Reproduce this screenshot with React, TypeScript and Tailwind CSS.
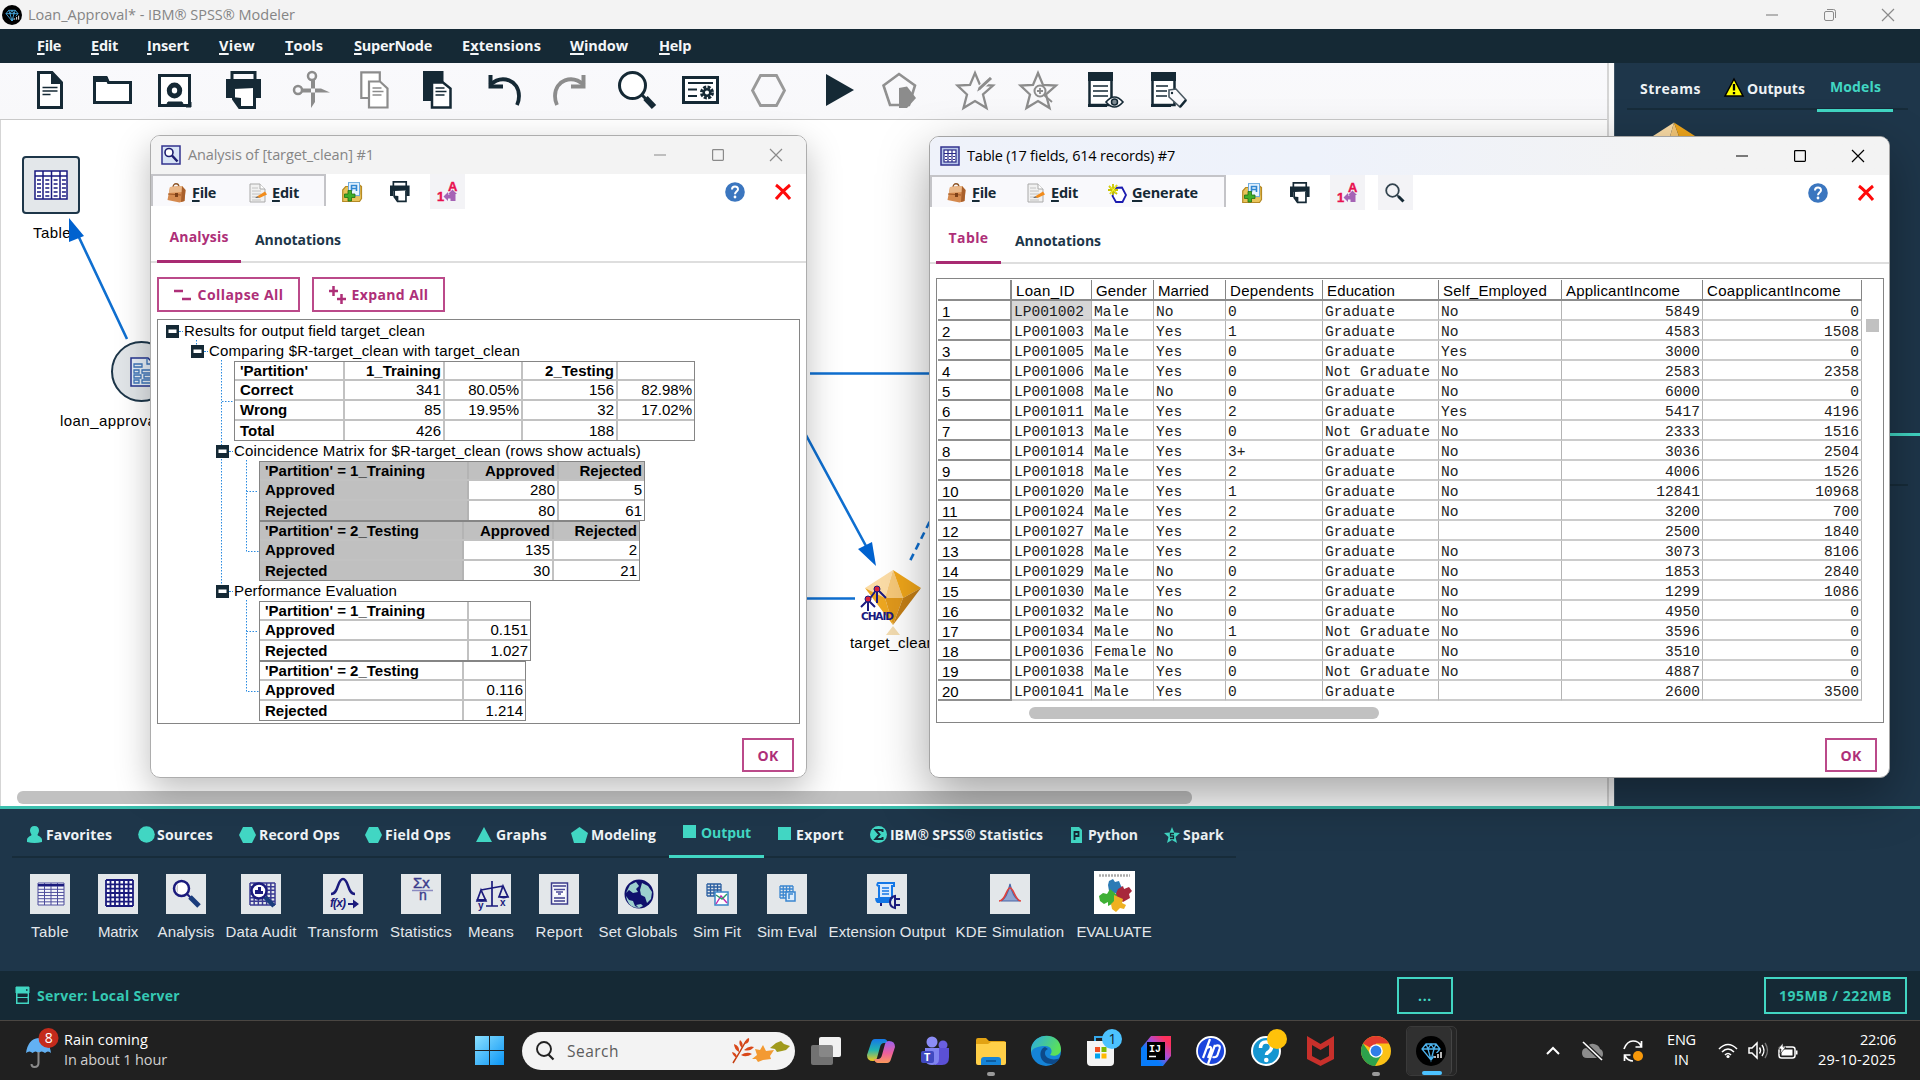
import React, { useLayoutEffect, useRef, useState } from "react";

const ARIAL = "font-['Liberation_Sans',sans-serif]";
const PLEX = "font-['Open_Sans',sans-serif] font-bold";
const SEGOE = "font-['Open_Sans',sans-serif]";

/* Text set to an exact width by adjusting its tracking. */
function Fit({ w, className = "", children }: { w: number; className?: string; children: React.ReactNode }) {
  const ref = useRef<HTMLSpanElement>(null);
  const [ls, setLs] = useState(0);
  useLayoutEffect(() => {
    const el = ref.current;
    if (!el) return;
    const n = (el.textContent || "").length || 1;
    setLs((w - el.getBoundingClientRect().width) / n);
  }, [w]);
  return (
    <span ref={ref} className={"inline-block w-fit whitespace-nowrap leading-5 " + className} style={{ letterSpacing: ls }}>
      {children}
    </span>
  );
}

/* Menu label with its first letter (or another) underlined. */
function Mn({ t, at = 0 }: { t: string; at?: number }) {
  return (
    <>
      {t.slice(0, at)}
      <u className="underline decoration-2 underline-offset-2">{t[at]}</u>
      {t.slice(at + 1)}
    </>
  );
}

function Svg({ w, h, vb, className = "", children }: { w: number; h: number; vb?: string; className?: string; children: React.ReactNode }) {
  return (
    <svg width={w} height={h} viewBox={vb || `0 0 ${w} ${h}`} className={"shrink-0 overflow-visible " + className} fill="none">
      {children}
    </svg>
  );
}

const D = "#152935";
const G = "#8c8c8c";

/* ---------- shared icons ---------- */
const Printer = ({ s = 1 }: { s?: number }) => (
  <Svg w={35 * s} h={38 * s} vb="0 0 35 38">
    <path d="M6 9V1.5h23V9" stroke={D} strokeWidth="3" />
    <path d="M0 8h35v19h-6V18H6v9H0z" fill={D} />
    <path d="M7.5 18v10l6 8.5h15V17" stroke={D} strokeWidth="3" fill="#fff" />
    <path d="M6 26l9 1v10z" fill={D} />
  </Svg>
);
const Diamond = ({ r }: { r: number }) => (
  <Svg w={r * 2} h={r * 2} vb="0 0 30 30">
    <circle cx="15" cy="15" r="15" fill="#000" />
    <path d="M10 8h10l4 5-9 11-9-11zM6 13h18M10 8l2 5 3 11 3-11 2-5M12 13l3-5 3 5" stroke="#4db2ec" strokeWidth="1.3" />
    <path d="M18 17h8v7h-8z" fill="#000" />
    <path d="M19 22v-2M22 22v-4M25 22v-6" stroke="#fff" strokeWidth="1.4" />
  </Svg>
);
const Bag = () => (
  <Svg w={19} h={20}>
    <path d="M6 4.500c0-5 6-5 6 0" stroke="#8d5426" strokeWidth="1.3" />
    <path d="M3 4l12-1 3.500 4-1 11-5 1.500L0.500 17z" fill="#d58a4f" />
    <path d="M3 4l12-1 1 6-14 1z" fill="#eab788" />
    <path d="M15 3l3.500 4-1 11-3.500 1z" fill="#a9602b" />
    <path d="M1 11l13 1" stroke="#a35a28" />
    <path d="M8 10h3v4H8z" fill="#7d3f17" />
  </Svg>
);
const EditDoc = () => (
  <Svg w={18} h={20}>
    <path d="M1 1h10l5 5v13H1z" fill="#f1f1f1" stroke="#a9a9a9" />
    <path d="M11 1v5h5" stroke="#a9a9a9" fill="#fff" />
    <path d="M3 5h6M3 8h9M3 11h9M3 14h6M3 17h9" stroke="#c2c2c2" />
    <path d="M8 13.500l8-5 2 3-7.500 3.500z" fill="#f28c1c" />
    <path d="M6 15l2-1.500 2.500 1z" fill="#555" />
  </Svg>
);
const FolderPlus = () => (
  <Svg w={20} h={20}>
    <path d="M0.700 8l3-3.500h3V12h11V3l1.800 1.500v12l-2 3H0.700z" fill="#e9c35a" stroke="#b58a25" strokeWidth="1.200" />
    <rect x="6.500" y="0.600" width="11" height="13" fill="#e8f4ff" stroke="#6aa9de" />
    <path d="M9.500 9V3.500h5V9M9.500 6.500h5" stroke="#2f86d0" strokeWidth="1.600" />
    <path d="M6 8.500h3.500V12H13v3.500H9.500V19H6v-3.500H2.500V12H6z" fill="#3fae2a" stroke="#206f12" strokeWidth=".8" />
  </Svg>
);
const OneA = () => (
  <Svg w={20} h={21}>
    <text x="0" y="20" fontSize="13" fontWeight="700" fill="#e8104f" stroke="#e8104f" strokeWidth=".4" fontFamily="Liberation Sans, sans-serif">1</text>
    <text x="11" y="9.500" fontSize="13" fontWeight="700" fill="#e8104f" stroke="#e8104f" strokeWidth=".4" fontFamily="Liberation Sans, sans-serif">A</text>
    <path d="M15.500 8.500l4.500 4.500h-1.500v7h-5v-2.500H11V20l-4.500-4.500L11 11v2.500h1.500V13H11z" fill="#a563b5" />
  </Svg>
);
const Help = () => (
  <Svg w={20} h={20}>
    <circle cx="10" cy="10" r="9.800" fill="#3b76bf" />
    <path d="M7 7.500c0-4 6-4 6-.300 0 2.300-3 2.500-3 5" stroke="#fff" strokeWidth="2" />
    <circle cx="10" cy="15" r="1.400" fill="#fff" />
  </Svg>
);
const RedX = () => (
  <Svg w={18} h={16}>
    <path d="M2 1c4 3 9 8 14 14M16 1C11 5 6 10 2 15" stroke="#ff0a0a" strokeWidth="3" />
  </Svg>
);
const Generate = () => (
  <Svg w={19} h={19}>
    <path d="M7 4l7-.500L18 11l-3.500 7H8l-3.500-6z" fill="#fff" stroke="#1c1cb0" strokeWidth="1.800" />
    <path d="M1 2l8 8M9 1L2 10M5 0v11M0 6h10" stroke="#c9c400" strokeWidth="1.800" />
    <path d="M2 2.500l6.500 6.500M8.500 1.500L2.500 9.500" stroke="#ffff3a" strokeWidth="1" />
  </Svg>
);
const AnalysisIco = () => (
  <Svg w={20} h={20}>
    <rect x="1" y="1" width="18" height="18" fill="#d8e4f6" stroke="#33338f" strokeWidth="1.500" />
    <circle cx="8" cy="7.500" r="4" fill="#fff" stroke="#1d1d70" strokeWidth="1.600" />
    <path d="M11 10.500l5.500 6" stroke="#1d1d70" strokeWidth="2.500" />
  </Svg>
);
const TableIco = () => (
  <Svg w={20} h={20}>
    <rect x="1" y="1" width="18" height="18" fill="#b9c7ea" stroke="#33338f" strokeWidth="1.500" />
    <rect x="4" y="4" width="12" height="12" fill="#fff" stroke="#2b2b88" strokeWidth="1.200" />
    <path d="M8 4v12M12 4v12M4 7.500h12M5 10.500h2M9 10.500h2M13 10.500h2M5 13.500h2M9 13.500h2M13 13.500h2" stroke="#2b2b88" strokeWidth="1.200" />
  </Svg>
);
const Controls = ({ c, restore = false }: { c: string; restore?: boolean }) => (
  <div className="flex items-center gap-[46px]">
    <Svg w={12} h={12}><path d="M0 6h12" stroke={c} strokeWidth="1.200" /></Svg>
    <Svg w={12} h={12}>
      {restore ? (
        <>
          <rect x=".5" y="2.500" width="9" height="9" rx="1.500" stroke={c} />
          <path d="M3 .5h6.500a2 2 0 0 1 2 2V9" stroke={c} />
        </>
      ) : (
        <rect x=".6" y=".6" width="10.800" height="10.800" rx=".8" stroke={c} strokeWidth="1.200" />
      )}
    </Svg>
    <Svg w={12} h={12}><path d="M0 0l12 12M12 0L0 12" stroke={c} strokeWidth="1.200" /></Svg>
  </div>
);

/* ---------- main window ---------- */
function TitleBar() {
  return (
    <div className="flex h-[29px] items-center bg-[#f3f3f3] pl-[2px] pr-[26px]">
      <Diamond r={10} />
      <Fit w={267} className={SEGOE + " ml-[6px] text-[14.5px] text-[#858585]"}>Loan_Approval* - IBM® SPSS® Modeler</Fit>
      <div className="ml-auto"><Controls c="#8a8a8a" restore /></div>
    </div>
  );
}

function MenuBar() {
  const items: [string, number, number, string][] = [
    ["File", 0, 24, "ml-[37px]"], ["Edit", 0, 27, "ml-[30px]"], ["Insert", 0, 42, "ml-[29px]"], ["View", 0, 36, "ml-[30px]"],
    ["Tools", 0, 38, "ml-[30px]"], ["SuperNode", 0, 78, "ml-[31px]"], ["Extensions", 1, 79, "ml-[30px]"], ["Window", 0, 58, "ml-[29px]"], ["Help", 0, 32, "ml-[31px]"],
  ];
  return (
    <div className="flex h-[34px] items-center bg-[#152935] text-[#f4f6f8]">
      {items.map(([t, at, w, m]) => (
        <Fit key={t} w={w} className={PLEX + " text-[14.5px] " + m}><Mn t={t} at={at} /></Fit>
      ))}
    </div>
  );
}

function Toolbar() {
  const star = "M19 2l5 12 13 .500-10 9 3.500 13.500L19 30 7.500 37 11 23.500 1.500 14.500 14 14z";
  return (
    <div className="flex h-[57px] items-center border-b border-[#c9c9c9] bg-gradient-to-b from-[#f9f9fc] to-[#f8f8fa] pb-[2px] pl-[37px]">
      <Svg w={26} h={38}><path d="M1.500 1.500H15l9.500 10v25h-23z" stroke={D} strokeWidth="3" fill="#fff" /><path d="M14 0v13h12z" fill={D} /><path d="M5.500 16.500h15M5.500 20h15M5.500 23.500h8" stroke={D} strokeWidth="1.500" /></Svg>
      <Svg w={39} h={28} className="ml-[30px]"><path d="M1.500 26.500h36v-20h-22l-2-4.500h-12z" stroke={D} strokeWidth="3" fill="#fff" /><path d="M0 0h14l2 6H0z" fill={D} /></Svg>
      <Svg w={33} h={33} className="ml-[26px]"><rect x="1.500" y="1.500" width="30" height="30" stroke={D} strokeWidth="3" fill="#fff" /><ellipse cx="16.500" cy="16.500" rx="5.200" ry="5.500" stroke={D} strokeWidth="5" /><path d="M8 32l2-4h14l2 4M28 33l5-5v5z" fill={D} stroke={D} /></Svg>
      <div className="ml-[35px]"><Printer /></div>
      <Svg w={37} h={38} className="ml-[32px]"><circle cx="19" cy="5" r="4" stroke={G} strokeWidth="2.500" /><circle cx="5" cy="19" r="4" stroke={G} strokeWidth="2.500" /><path d="M18 9v28l4-6V9zM9 17.500h19l9 4H9z" fill={G} /></Svg>
      <Svg w={29} h={38} className="ml-[30px]"><path d="M1.300 1.300h18.500V27H1.300z" stroke={G} strokeWidth="2.200" fill="#fff" /><path d="M9 10.500h11l7.500 7v19H9z" stroke={G} strokeWidth="2.200" fill="#fff" /><path d="M12.500 17h9M12.500 20.500h11M12.500 24h9" stroke={G} strokeWidth="1.500" /></Svg>
      <Svg w={29} h={38} className="ml-[34px]"><path d="M0 0h20.500v30H0z" fill={D} /><path d="M9 11.500h11l7.500 6v19H9z" stroke={D} strokeWidth="2.500" fill="#fff" /><path d="M12.500 17h9M12.500 20.500h11M12.500 24h9" stroke={D} strokeWidth="1.600" /></Svg>
      <Svg w={34} h={32} className="ml-[36px]"><path d="M2 11C14 0 31 6 31 22q0 5-2 9" stroke={D} strokeWidth="3.800" /><path d="M2.500 1v11.500H15" stroke={D} strokeWidth="4" /></Svg>
      <Svg w={34} h={32} className="ml-[30px]"><path d="M32 11C20 0 3 6 3 22q0 5 2 9" stroke={G} strokeWidth="3.800" /><path d="M31.500 1v11.500H19" stroke={G} strokeWidth="4" /></Svg>
      <Svg w={38} h={38} className="ml-[32px]"><circle cx="14.500" cy="14.500" r="13" stroke={D} strokeWidth="3" fill="#fff" /><path d="M23.500 23.500l4 4" stroke={D} strokeWidth="3" /><path d="M27.500 27l8.500 9" stroke={D} strokeWidth="6" /></Svg>
      <Svg w={37} h={28} className="ml-[26px]"><rect x="1.500" y="1.500" width="34" height="25" stroke={D} strokeWidth="3" fill="#fff" /><path d="M6 7h25M6 13.500h9M6 20h9" stroke={D} strokeWidth="2" /><circle cx="25" cy="16.500" r="5.500" stroke={D} strokeWidth="3" strokeDasharray="3 1.300" /><circle cx="25" cy="16.500" r="3.300" stroke={D} strokeWidth="2.500" /></Svg>
      <Svg w={35} h={33} className="ml-[32px]"><path d="M9.500 1.500h16l8 15-8 15h-16l-8-15z" stroke="#999" strokeWidth="2.800" /></Svg>
      <Svg w={28} h={32} className="ml-[40px]"><path d="M0 0l28 16L0 32z" fill={D} /></Svg>
      <Svg w={35} h={36} className="ml-[28px]"><path d="M17 2L33 13.500 27 33H8L1.500 13.500z" stroke="#909090" strokeWidth="2.600" /><path d="M17 16l8-1.500 9 11.500-9 10h-8z" fill={G} /></Svg>
      <Svg w={38} h={38} className="ml-[39px]"><path d={star} stroke={G} strokeWidth="2.300" /><path d="M20 22l2-6L34 5l3 3-12 11z" fill={G} stroke="#f9f9fc" strokeWidth="1.200" /></Svg>
      <Svg w={38} h={38} className="ml-[25px]"><path d={star} stroke={G} strokeWidth="2.300" /><circle cx="21" cy="20" r="5.500" stroke={G} strokeWidth="2" fill="#f9f9fc" /><path d="M18 20h6M21 17v6M25 24l8 7" stroke={G} strokeWidth="1.800" /></Svg>
      <Svg w={36} h={37} className="ml-[31px]"><path d="M1.500 5v28h22V5" stroke={D} strokeWidth="2.500" fill="#fff" /><path d="M0 0h25v9H0zM0 32h19v3H0z" fill={D} /><path d="M5 14h15M5 19h15M5 24h15" stroke={D} strokeWidth="1.600" /><path d="M18 30q8.500-10 17 0-8.500 10-17 0z" fill="#f9f9fc" stroke={D} strokeWidth="1.600" /><circle cx="26.500" cy="30" r="3" fill="#7e8b93" stroke={D} strokeWidth="1.500" /></Svg>
      <Svg w={36} h={37} className="ml-[27px]"><path d="M1.500 5v28h22V5" stroke={D} strokeWidth="2.500" fill="#fff" /><path d="M0 0h25v9H0zM0 32h20v3H0z" fill={D} /><path d="M5 14h12M5 19h11M5 24h11" stroke={D} strokeWidth="1.600" /><path d="M18 18l7-1 10 11-6 7-11-10z" fill="#f9f9fc" stroke="#4d5b64" strokeWidth="1.600" /><path d="M29 35l6-7" stroke={D} strokeWidth="2.500" /><circle cx="21" cy="21" r="1.200" fill={D} /></Svg>
    </div>
  );
}

const Gem = ({ w, h }: { w: number; h: number }) => (
  <Svg w={w} h={h} vb="0 0 56 55">
    <path d="M28 0L0 18l20 10z" fill="#fbdca6" />
    <path d="M28 0l-8 28h18z" fill="#f6c878" />
    <path d="M28 0l10 28 18-10z" fill="#f0a61a" />
    <path d="M0 18l20 10 8 27z" fill="#eda721" />
    <path d="M20 28h18l-10 27z" fill="#e0981b" />
    <path d="M38 28l18-10-28 37z" fill="#c47f16" />
  </Svg>
);

function Canvas() {
  return (
    <div className="relative h-[686px] w-[1607px] overflow-hidden border-l border-[#d5d5d5] bg-white">
      {/* node coordinates are relative to the stream canvas */}
      <div className="absolute left-[21px] top-[36px] flex h-[58px] w-[58px] items-center justify-center rounded border-2 border-[#1d3649] bg-[#e3e7ea]">
        <Svg w={34} h={30} vb="0 0 34 30">
          <rect x="1" y="1" width="32" height="28" fill="#fff" stroke="#1a1a80" strokeWidth="1.500" />
          <path d="M1 6h32M9 1v28M17.500 1v28M26 1v28" stroke="#1a1a80" strokeWidth="1.500" />
          <path d="M3 10h30M3 14h30M3 18h30M3 22h30M3 26h30" stroke="#1a1a80" strokeWidth="1.300" strokeDasharray="4 4.300" />
        </Svg>
      </div>
      <div className={ARIAL + " absolute left-[32px] top-[102px] text-[15px] text-black"}><Fit w={38}>Table</Fit></div>
      <div className="absolute left-[110px] top-[221px] flex h-[61px] w-[61px] items-center rounded-full border-2 border-[#1d3649] bg-[#e1e5e8] pl-[17px]">
        <Svg w={24} h={30}>
          <path d="M1 1h17l6 6v22H1z" fill="#e6eff8" stroke="#24348f" strokeWidth="1.500" />
          <path d="M4 7h8v3H4zM4 13h5v3H4zM12 13h9v3h-9zM4 18h7v3H4zM14 18h7v3h-7zM4 23h5v3H4zM12 23h9v3h-9zM17 1v6h6" stroke="#3d74b8" strokeWidth="1.300" />
        </Svg>
      </div>
      <div className={ARIAL + " absolute left-[59px] top-[290px] text-[15px] text-black"}><Fit w={100}>loan_approval</Fit></div>
      <svg width="1606" height="686" viewBox="1 120 1606 686" className="absolute left-0 top-0" fill="none" stroke="#0f6fd0" strokeWidth="2.600">
        <path d="M127 339L76 231M810 373.500h130M800 424l66 122M806 598.500h49" />
        <path d="M935 511l-25 50" strokeDasharray="7 5" />
        <path d="M69 218l15 18-15 6z M876 566l-18-17 14-7z" fill="#0062cf" stroke="none" />
      </svg>
      <div className="absolute left-[864px] top-[450px]"><Gem w={56} h={55} /></div>
      <svg width="70" height="80" className="absolute left-[859px] top-[460px] overflow-visible" fill="none">
        <path d="M33 46l7 9H26z" fill="#f3dcb0" />
        <path d="M17 9v14M17 9L8 21M17 9l9 9M8 19v12M8 20l-7 7M8 20l7 7" stroke="#1a1a80" strokeWidth="2" />
        <circle cx="17" cy="9" r="3" fill="#d8213a" stroke="#1a1a80" />
        <circle cx="8" cy="19" r="3" fill="#d8213a" stroke="#1a1a80" />
        <text x="1" y="40" fontSize="10.500" fontWeight="700" fill="#1a1a80" fontFamily="DejaVu Sans, sans-serif" textLength="33">CHAID</text>
      </svg>
      <div className={ARIAL + " absolute left-[849px] top-[512px] text-[15px] text-black"}><Fit w={85}>target_clean</Fit></div>
      <div className="absolute left-[16px] top-[671px] h-[13px] w-[1175px] rounded-[6px] bg-[#c1c1c1]" />
    </div>
  );
}

function SidePanel() {
  return (
    <div className="flex flex-1 flex-col border-l border-[#3d5263] bg-[#1e364a]">
      <div className="mx-[12px] flex h-[47px] items-center border-b-2 border-[#172c3a]">
        <Fit w={61} className={PLEX + " ml-[13px] mt-[6px] text-[14px] text-[#eef2f5]"}>Streams</Fit>
        <Svg w={20} h={19} className="ml-[23px] mt-[4px]"><path d="M10 1l9 17H1z" fill="#ffff00" stroke="#000" strokeWidth="1.500" /><path d="M10 6v6.500M10 14v2.300" stroke="#000" strokeWidth="2.300" /></Svg>
        <Fit w={58} className={PLEX + " ml-[3px] mt-[6px] text-[14px] text-[#eef2f5]"}>Outputs</Fit>
        <div className="-mb-[4px] ml-[12px] flex h-[49px] w-[76px] items-center justify-center border-b-[3px] border-[#41d6c3]">
          <Fit w={51} className={PLEX + " ml-[1px] mt-[1px] text-[14px] text-[#41d6c3]"}>Models</Fit>
        </div>
      </div>
      <div className="ml-[38px] mt-[12px] h-[200px] shrink-0"><Gem w={42} h={42} /></div>
      <div className="mt-[111px] h-[3px] w-full shrink-0 bg-[#41d6c3]" />
      <div className="mx-[12px] mt-[48px] h-[2px] bg-[#172c3a]" />
    </div>
  );
}

/* ---------- node palette ---------- */
const T = "#41d6c3";
function PaletteTabs() {
  const txt = PLEX + " text-[14px] text-[#eef2f5]";
  const hex = <Svg w={17} h={16}><path d="M4 0h9l4 8-4 8H4L0 8z" fill={T} /></Svg>;
  return (
    <div className="ml-[12px] flex h-[49px] w-[1224px] items-center border-b-2 border-[#172c3a] pl-[15px] pt-[4px]">
      <Svg w={15} h={17}><path d="M7.500 0c3 0 4.500 2 4.500 4.500S10.500 8 10.500 9s4.500 1.500 4.500 5v2Q7.500 18 0 16v-2c0-3.500 4.500-4 4.500-5S3 7 3 4.500 4.500 0 7.500 0z" fill={T} /></Svg>
      <Fit w={66} className={txt + " ml-[4px]"}>Favorites</Fit>
      <Svg w={17} h={17} className="ml-[26px]"><circle cx="8.500" cy="8.500" r="8.300" fill={T} /></Svg>
      <Fit w={56} className={txt + " ml-[2px]"}>Sources</Fit>
      <div className="ml-[26px]">{hex}</div>
      <Fit w={81} className={txt + " ml-[3px]"}>Record Ops</Fit>
      <div className="ml-[25px]">{hex}</div>
      <Fit w={66} className={txt + " ml-[3px]"}>Field Ops</Fit>
      <Svg w={16} h={15} className="ml-[25px]"><path d="M8 0l8 15H0z" fill={T} /></Svg>
      <Fit w={51} className={txt + " ml-[4px]"}>Graphs</Fit>
      <Svg w={17} h={16} className="ml-[24px]"><path d="M8.500 0L17 6l-3 10H3L0 6z" fill={T} /></Svg>
      <Fit w={65} className={txt + " ml-[3px]"}>Modeling</Fit>
      <div className="-mb-[2px] ml-[13px] flex h-[45px] w-[95px] items-center self-end border-b-[3px] border-[#41d6c3] pb-[3px] pl-[14px]">
        <div className="mb-[2px] size-[13px] bg-[#41d6c3]" />
        <Fit w={50} className={PLEX + " ml-[5px] text-[14px] text-[#41d6c3]"}>Output</Fit>
      </div>
      <div className="mb-[3px] ml-[14px] size-[13px] bg-[#41d6c3]" />
      <Fit w={48} className={txt + " ml-[5px]"}>Export</Fit>
      <Svg w={17} h={17} className="ml-[26px]"><circle cx="8.500" cy="8.500" r="8.500" fill={T} /><path d="M12.500 6V4h-7l4 4.500-4 4.500h7v-2" stroke={D} strokeWidth="2" /></Svg>
      <Fit w={153} className={txt + " ml-[3px]"}>IBM® SPSS® Statistics</Fit>
      <Svg w={11} h={16} className="ml-[28px]"><path d="M0 0h8l3 3v13H0z" fill={T} /><path d="M3.500 13V5h4v4h-4" stroke={D} strokeWidth="1.800" /></Svg>
      <Fit w={50} className={txt + " ml-[6px]"}>Python</Fit>
      <Svg w={16} h={16} className="ml-[26px]"><path d="M8 0l2.200 5.500L16 6l-4.500 4L13 16l-5-3-5 3 1.500-6L0 6l5.800-.500z" fill={T} /><path d="M10 6.500H6.500v2.500H9.500v2.500H6" stroke={D} strokeWidth="1.300" /></Svg>
      <Fit w={41} className={txt + " ml-[3px]"}>Spark</Fit>
    </div>
  );
}

const N = "#1b1b7d";
const grid = (x: number, y: number, w: number, h: number, n: number, m: number) => {
  let d = "";
  for (let i = 0; i <= n; i++) d += `M${x + (w * i) / n} ${y}v${h}`;
  for (let j = 0; j <= m; j++) d += `M${x} ${y + (h * j) / m}h${w}`;
  return d;
};
const nodeArt: Record<string, React.ReactNode> = {
  Table: <><rect x="8" y="9" width="26" height="22" fill="#f4f6fa" /><path d={grid(8, 9, 26, 22, 4, 7)} stroke="#4d4d9c" /><path d="M8 11h26" stroke={N} strokeWidth="2" /></>,
  Matrix: <><rect x="8" y="6" width="27" height="26" fill="#fff" /><path d={grid(8, 6, 27, 26, 6, 6)} stroke={N} strokeWidth="1.800" /></>,
  Analysis: <><circle cx="15.500" cy="14.500" r="7.500" fill="#fff" stroke={N} strokeWidth="2.500" /><path d="M12 9.500q-3 5 0 10z" fill="#c9c9c9" /><path d="M21 20l4 4" stroke={N} strokeWidth="2" /><path d="M24 23l9 9" stroke="#1a3c7c" strokeWidth="5" /></>,
  "Data Audit": <><path d={grid(9, 9, 25, 22, 6, 6)} stroke="#3a3a92" strokeWidth="1.500" /><circle cx="18" cy="17" r="7.500" fill="#fff" stroke={N} strokeWidth="2.500" /><path d="M14 20v-4h3v-3h3v4h2v3z" fill={N} /><path d="M24 23l9 9" stroke="#1a3c7c" strokeWidth="4.500" /></>,
  Transform: <><path d="M8 20c8 0 6-15 12-15s4 15 12 15" stroke={N} strokeWidth="2.500" /><text x="7" y="33" fontSize="12" fontStyle="italic" fontWeight="700" fill={N} fontFamily="Liberation Sans, sans-serif" textLength="16">f(x)</text><path d="M25 29h5v-3.500l6 4.500-6 4.500V31h-5z" fill={N} /></>,
  Statistics: <><text x="12" y="13.500" fontSize="15" fill="#3c3c8c" stroke="#3c3c8c" strokeWidth=".4" fontFamily="Liberation Sans, sans-serif">Σx</text><path d="M11 16.500h21" stroke="#8a8ac0" strokeWidth="1.500" /><text x="18" y="26" fontSize="14" fill="#3c3c8c" stroke="#3c3c8c" strokeWidth=".4" fontFamily="Liberation Sans, sans-serif">n</text></>,
  Means: <><path d="M21 7v25M15 32h12M10 16l22-4M10 16l-4 11h9zM32 12l-4 11h9z" stroke={N} strokeWidth="1.700" /><path d="M5 25h11q-5 5-11 0zM27 22h11q-5 5-11 0z" fill={N} /><text x="7" y="35" fontSize="10" fontWeight="700" fill={N} fontFamily="Liberation Sans, sans-serif">y</text><text x="29" y="32" fontSize="10" fontWeight="700" fill={N} fontFamily="Liberation Sans, sans-serif">x</text></>,
  Report: <><rect x="12.500" y="9" width="16" height="21" fill="#f4f6fa" stroke="#3c3c8c" strokeWidth="1.500" /><path d="M14 12h13M15 24h11M15 27h11" stroke="#3c3c8c" strokeWidth="1.500" /><rect x="15" y="14.500" width="11" height="6.500" fill="#fff" /><path d="M15 15.500h11M17 18h7M19 20h3" stroke="#4a4a98" strokeWidth="1.300" /></>,
  "Set Globals": <><circle cx="21" cy="20" r="14.500" fill="#10106c" /><path d="M8 22l3 4 4 1 2 5 4 2q-9 0-12-8zM12 11l6-3 3 4-3 3 2 3-5 1-4-3-3 3zM24 9l6 3 4 6-1 7-4 4-2-6-4-2-1-5zM18 31l5-1 2 2-4 2z" fill="#9ccfcd" /></>,
  "Sim Fit": <><path d={grid(10, 10, 14, 12, 4, 4)} stroke="#2b5fa0" strokeWidth="1.300" /><rect x="18" y="18" width="13" height="13" fill="#fff" stroke="#3a86c8" strokeWidth="1.500" /><path d="M19 30l5-8 6 7" stroke="#c02bb0" strokeWidth="1.400" /><path d="M19 21l6 4 5-5" stroke="#2a9a6a" strokeWidth="1.400" /></>,
  "Sim Eval": <><path d={grid(13, 12, 13, 12, 4, 4)} stroke="#3a86d0" strokeWidth="1.300" /><rect x="19" y="18" width="9" height="9" fill="#dcecfb" stroke="#3a86d0" strokeWidth="1.500" /><path d="M22 25v-5h4" stroke="#3a86d0" strokeWidth="1.500" /></>,
  "Extension Output": <><path d="M11 9h16v3h-2v12H12V12q-3 0-1-3z" fill="#dbeafc" stroke="#1477e6" strokeWidth="2" /><path d="M15 14h7M15 17h7M15 20h7" stroke="#1477e6" strokeWidth="1.300" /><path d="M8 24h17q0 5-4 5H10q-2-2-2-5z" fill="#1477e6" /><path d="M14 29v3M28 22q-5 1-5 6t5 6zM28 25h5M28 31h5" stroke={N} strokeWidth="2" /></>,
  "KDE Simulation": <><path d="M11 27q6-3 9-17 3 14 10 17z" fill="#8fa5cf" stroke="#4a66a8" strokeWidth="1.200" /><path d="M9 27c7 0 7-13 11-13s5 13 11 13" stroke="#e0413c" strokeWidth="1.600" /></>,
};

function Palette() {
  const items: [string, number, string][] = [
    ["Table", 38, "w-[40px] ml-[30px]"], ["Matrix", 40, "w-[60px] ml-[18px]"], ["Analysis", 57, "w-[60px] ml-[8px]"], ["Data Audit", 71, "w-[72px] ml-[9px]"],
    ["Transform", 71, "w-[72px] ml-[10px]"], ["Statistics", 62, "w-[64px] ml-[10px]"], ["Means", 46, "w-[48px] ml-[14px]"], ["Report", 47, "w-[50px] ml-[19px]"],
    ["Set Globals", 79, "w-[80px] ml-[14px]"], ["Sim Fit", 48, "w-[50px] ml-[14px]"], ["Sim Eval", 60, "w-[62px] ml-[14px]"],
    ["Extension Output", 117, "w-[118px] ml-[10px]"], ["KDE Simulation", 109, "w-[110px] ml-[9px]"], ["EVALUATE", 75, "w-[76px] ml-[11px]"],
  ];
  return (
    <div className="h-[165px] border-t-[3px] border-[#3cbfae] bg-[#1e364a]">
      <PaletteTabs />
      <div className="flex items-start pt-[16px]">
        {items.map(([t, w, c]) => (
          <div key={t} className={"flex shrink-0 flex-col items-center " + c}>
            {t === "EVALUATE" ? (
              <Svg w={41} h={43} className="-mt-[3px] bg-white">
                <path d="M5 4.500h31" stroke="#aaa" strokeWidth="2.500" strokeDasharray="2 1" />
                <path d="M14 14l1-4 4-2 2 3 4-1 2 5 4 4-5 5-11-4z" fill="#2c7bb5" />
                <path d="M24 18l5-3 1 3 5-2 3 4-3 3 1 4-7 4-8-6z" fill="#a8283c" />
                <path d="M5 25l4-3 4 1 3-5 7 6-3 8-6 3 0-4-4 2-4-3z" fill="#3fb034" />
                <path d="M17 33l3-3 0-6 9 4-1 4 4 2-2 4-4-1-4 4-4-3z" fill="#eeb121" />
              </Svg>
            ) : (
              <div className="size-[40px] bg-[#e3e7ea]"><Svg w={40} h={40}>{nodeArt[t]}</Svg></div>
            )}
            <Fit w={w} className={ARIAL + " mt-[8px] text-[15px] text-[#e4e8ec]"}>{t}</Fit>
          </div>
        ))}
      </div>
    </div>
  );
}

function StatusBar() {
  return (
    <div className="flex h-[49px] items-center bg-[#152935] pl-[16px] pr-[13px]">
      <Svg w={13} h={17}><rect x=".75" y=".75" width="11.500" height="15.500" stroke={T} strokeWidth="1.500" /><path d="M0 0h13v6H0zM0 10.500h13" fill={T} stroke={T} /><path d="M10 3h1.500M10 8h1.500M10 13.500h1.500M2 8h5M2 13.500h5" stroke={D} strokeWidth="1.300" /></Svg>
      <Fit w={143} className={PLEX + " ml-[8px] text-[14px] text-[#35c9b4]"}>Server: Local Server</Fit>
      <div className={PLEX + " ml-auto flex h-[37px] w-[56px] items-center justify-center border-2 border-[#41d6c3] text-[14px] text-[#41d6c3]"}><Fit w={14}>...</Fit></div>
      <div className={PLEX + " ml-[311px] flex h-[37px] w-[143px] items-center justify-center border-2 border-[#41d6c3] text-[14px] text-[#35c9b4]"}><Fit w={113}>195MB / 222MB</Fit></div>
    </div>
  );
}

/* ---------- dialogs ---------- */
function DialogTabs({ first, w, cls }: { first: string; w: number; cls: string }) {
  return (
    <div className="flex h-[54px] items-stretch border-b-2 border-[#dedede]">
      <div className={"-mb-[2px] flex items-center justify-center border-b-[3px] border-[#a82a72] pt-[5px] " + cls}>
        <Fit w={w} className={PLEX + " text-[14px] text-[#ae2f78]"}>{first}</Fit>
      </div>
      <Fit w={86} className={PLEX + " ml-[14px] mt-[21px] text-[14px] text-[#1d3649]"}>Annotations</Fit>
    </div>
  );
}
const Btn = ({ cls, children }: { cls: string; children: React.ReactNode }) => (
  <div className={PLEX + " flex items-center justify-center border-2 border-[#bb4a8a] bg-white pt-px text-[14px] text-[#ae2f78] " + cls}>{children}</div>
);
const menuTxt = PLEX + " text-[14.5px] text-[#152935]";

function Pm() {
  return <Svg w={13} h={13}><rect width="13" height="13" fill="#152935" /><rect x="2.500" y="4.500" width="8" height="3.500" fill="#fff" /></Svg>;
}
function TreeRow({ pad, w, t }: { pad: string; w: number; t: string }) {
  return (
    <div className={"flex h-[20px] items-center " + pad}>
      <Pm />
      <span className="w-[4px] border-t border-dotted border-[#2a8be0]" />
      <Fit w={w} className={ARIAL + " ml-[1px] text-[15px] text-black"}>{t}</Fit>
    </div>
  );
}
function ResTable({ ml, cols, rows, shade = false }: { ml: string; cols: string[]; rows: string[][]; shade?: boolean }) {
  return (
    <div className={"flex w-fit flex-col border border-[#858585] " + ml}>
      {rows.map((r, i) => (
        <div key={i} className={"flex " + (i === rows.length - 1 ? "h-[19px]" : i === 0 ? "h-[19px] border-b-2 border-[#c2c2c2]" : "h-[20px] border-b-2 border-[#c2c2c2]")}>
          {r.map((c, j) => (
            <div
              key={j}
              className={
                ARIAL + " flex items-center text-[15px] leading-[18px] text-black " + cols[j] +
                (j === 0 ? " pl-[5px] font-bold" : " justify-end pr-[2px]") + (i === 0 ? " font-bold" : "") +
                (j < r.length - 1 ? " border-r-2" : "") + (shade && (i === 0 || j === 0) ? " border-[#b4b4b4] bg-[#c0c0c0]" : " border-[#c2c2c2] bg-white")
              }
            >
              {c}
            </div>
          ))}
        </div>
      ))}
    </div>
  );
}

function AnalysisDialog() {
  return (
    <div className="absolute left-[150px] top-[135px] flex h-[643px] w-[657px] flex-col overflow-hidden rounded-[10px] border border-[#adadad] bg-white">
      <div className="flex h-[38px] items-center bg-[#f3f3f3] pl-[10px] pr-[24px]">
        <AnalysisIco />
        <Fit w={186} className={SEGOE + " ml-[7px] text-[14.5px] text-[#858585]"}>Analysis of [target_clean] #1</Fit>
        <div className="ml-auto"><Controls c="#8a8a8a" /></div>
      </div>
      <div className="flex h-[35px] items-start">
        <div className="flex h-[32px] w-[175px] items-center border-2 border-b-0 border-[#c4c4c8] bg-[#f9f9fc] pb-1 pl-[14px] pt-2">
          <Bag />
          <Fit w={24} className={menuTxt + " ml-[6px]"}><Mn t="File" /></Fit>
          <div className="ml-[33px]"><EditDoc /></div>
          <Fit w={27} className={menuTxt + " ml-[5px]"}><Mn t="Edit" /></Fit>
        </div>
        <div className="flex h-[35px] items-center pl-[16px]">
          <FolderPlus />
          <div className="ml-[28px]"><Printer s={0.56} /></div>
          <div className="ml-[20px] flex h-[35px] w-[35px] items-center justify-center bg-[#f3f3f6]"><OneA /></div>
        </div>
        <div className="ml-auto flex h-[35px] items-center gap-[29px] pr-[14px]"><Help /><RedX /></div>
      </div>
      <DialogTabs first="Analysis" w={59} cls="ml-[6px] w-[84px]" />
      <div className="ml-[6px] mt-[14px] flex gap-[12px]">
        <Btn cls="h-[35px] w-[143px]">
          <Svg w={17} h={14}><path d="M0 3h9M8 11h9" stroke="#ae2f78" strokeWidth="2.500" /></Svg>
          <Fit w={86} className="ml-[7px]">Collapse All</Fit>
        </Btn>
        <Btn cls="h-[35px] w-[133px]">
          <Svg w={17} h={18}><path d="M0 5h9M4.500 0v10M8 13h9M12.500 8v10" stroke="#ae2f78" strokeWidth="2.500" /></Svg>
          <Fit w={77} className="ml-[6px]">Expand All</Fit>
        </Btn>
      </div>
      <div className="relative ml-[6px] mt-[7px] h-[405px] w-[643px] border border-[#858585] bg-white p-px">
        <svg width="110" height="400" viewBox="159 321 110 400" className="absolute left-px top-px" fill="none" stroke="#2a8be0" strokeDasharray="1.500 1.500">
          <path d="M196.500 340v5M221.500 360v225M222 401.500h12M246.500 460v91.500h12M246.500 491.500h12M246.500 600v91.500h12M246.500 631.500h12" />
        </svg>
        <div className="relative">
          <TreeRow pad="pl-[7px]" w={241} t="Results for output field target_clean" />
          <TreeRow pad="pl-[32px]" w={311} t="Comparing $R-target_clean with target_clean" />
          <ResTable
            ml="ml-[75px]"
            cols={["w-[110px]", "w-[100px]", "w-[78px]", "w-[95px]", "w-[76px]"]}
            rows={[["'Partition'", "1_Training", "", "2_Testing", ""], ["Correct", "341", "80.05%", "156", "82.98%"], ["Wrong", "85", "19.95%", "32", "17.02%"], ["Total", "426", "", "188", ""]]}
          />
          <TreeRow pad="pl-[57px]" w={407} t="Coincidence Matrix for $R-target_clean (rows show actuals)" />
          <ResTable ml="ml-[100px]" shade cols={["w-[209px]", "w-[90px]", "w-[85px]"]} rows={[["'Partition' = 1_Training", "Approved", "Rejected"], ["Approved", "280", "5"], ["Rejected", "80", "61"]]} />
          <ResTable ml="ml-[100px]" shade cols={["w-[204px]", "w-[90px]", "w-[85px]"]} rows={[["'Partition' = 2_Testing", "Approved", "Rejected"], ["Approved", "135", "2"], ["Rejected", "30", "21"]]} />
          <TreeRow pad="pl-[57px]" w={163} t="Performance Evaluation" />
          <ResTable ml="ml-[100px]" cols={["w-[209px]", "w-[61px]"]} rows={[["'Partition' = 1_Training", ""], ["Approved", "0.151"], ["Rejected", "1.027"]]} />
          <ResTable ml="ml-[100px]" cols={["w-[204px]", "w-[61px]"]} rows={[["'Partition' = 2_Testing", ""], ["Approved", "0.116"], ["Rejected", "1.214"]]} />
        </div>
      </div>
      <div className="mr-[12px] mt-[14px] flex justify-end"><Btn cls="h-[34px] w-[52px]"><Fit w={21}>OK</Fit></Btn></div>
    </div>
  );
}

const data: string[][] = `LP001002|Male|No|0|Graduate|No|5849|0
LP001003|Male|Yes|1|Graduate|No|4583|1508
LP001005|Male|Yes|0|Graduate|Yes|3000|0
LP001006|Male|Yes|0|Not Graduate|No|2583|2358
LP001008|Male|No|0|Graduate|No|6000|0
LP001011|Male|Yes|2|Graduate|Yes|5417|4196
LP001013|Male|Yes|0|Not Graduate|No|2333|1516
LP001014|Male|Yes|3+|Graduate|No|3036|2504
LP001018|Male|Yes|2|Graduate|No|4006|1526
LP001020|Male|Yes|1|Graduate|No|12841|10968
LP001024|Male|Yes|2|Graduate|No|3200|700
LP001027|Male|Yes|2|Graduate||2500|1840
LP001028|Male|Yes|2|Graduate|No|3073|8106
LP001029|Male|No|0|Graduate|No|1853|2840
LP001030|Male|Yes|2|Graduate|No|1299|1086
LP001032|Male|No|0|Graduate|No|4950|0
LP001034|Male|No|1|Not Graduate|No|3596|0
LP001036|Female|No|0|Graduate|No|3510|0
LP001038|Male|Yes|0|Not Graduate|No|4887|0
LP001041|Male|Yes|0|Graduate||2600|3500`.split("\n").map((r) => r.split("|"));
const colW = ["w-[80px]", "w-[62px]", "w-[72px]", "w-[97px]", "w-[116px]", "w-[123px]", "w-[141px]", "w-[159px]"];
const heads: [string, number][] = [["Loan_ID", 59], ["Gender", 51], ["Married", 51], ["Dependents", 84], ["Education", 68], ["Self_Employed", 104], ["ApplicantIncome", 114], ["CoapplicantIncome", 134]];

function TableDialog() {
  return (
    <div className="absolute left-[929px] top-[136px] flex h-[642px] w-[961px] flex-col overflow-hidden rounded-[10px] border border-[#a4a4a4] bg-white">
      <div className="flex h-[38px] items-center bg-gradient-to-r from-[#eff2fa] via-[#eef2fb] via-40% to-[#f3f3f3] to-80% pl-[10px] pr-[25px]">
        <TableIco />
        <Fit w={208} className={SEGOE + " ml-[7px] text-[14.5px] text-black"}>Table (17 fields, 614 records) #7</Fit>
        <div className="ml-auto"><Controls c="#000" /></div>
      </div>
      <div className="flex h-[35px] items-start">
        <div className="flex h-[32px] w-[296px] items-center border-2 border-b-0 border-[#c4c4c8] bg-[#f9f9fc] pb-[5px] pl-[15px] pt-[7px]">
          <Bag />
          <Fit w={24} className={menuTxt + " ml-[6px]"}><Mn t="File" /></Fit>
          <div className="ml-[31px]"><EditDoc /></div>
          <Fit w={27} className={menuTxt + " ml-[6px]"}><Mn t="Edit" /></Fit>
          <div className="ml-[30px]"><Generate /></div>
          <Fit w={66} className={menuTxt + " ml-[5px]"}><Mn t="Generate" /></Fit>
        </div>
        <div className="flex h-[35px] items-center pl-[16px]">
          <FolderPlus />
          <div className="ml-[28px]"><Printer s={0.56} /></div>
          <div className="ml-[20px] flex h-[35px] w-[35px] items-center justify-center bg-[#f3f3f6]"><OneA /></div>
          <div className="ml-[13px] flex h-[35px] w-[35px] items-center justify-center bg-[#f3f3f6]">
            <Svg w={20} h={20}><circle cx="7.500" cy="7.500" r="6.300" stroke="#33444f" strokeWidth="1.800" /><path d="M12 12l2 2" stroke="#33444f" strokeWidth="2" /><path d="M13.500 13.500l5 5" stroke={D} strokeWidth="3" /></Svg>
          </div>
        </div>
        <div className="ml-auto flex h-[35px] items-center gap-[29px] pr-[14px]"><Help /><RedX /></div>
      </div>
      <DialogTabs first="Table" w={40} cls="ml-[6px] w-[65px]" />
      <div className="ml-[6px] mt-[14px] h-[445px] w-[948px] border border-[#858585] bg-white p-px">
        <div className="flex">
          <div className="w-[924px]">
            <div className="flex h-[21px] border-b-2 border-[#8c8c8c]">
              <div className="w-[74px] border-r-2 border-[#8a8a8a]" />
              {heads.map(([h, w], i) => (
                <div key={h} className={"flex shrink-0 items-center border-r border-[#858585] pl-[4px] pt-[3px] " + colW[i]}>
                  <Fit w={w} className={ARIAL + " text-[15px] text-black"}>{h}</Fit>
                </div>
              ))}
            </div>
            {data.map((r, n) => (
              <div key={n} className="flex h-[20px]">
                <div className={ARIAL + " w-[74px] border-b-2 border-r-2 border-[#909090] pl-[4px] pt-px text-[15px] leading-[20px] text-black"}>{n + 1}</div>
                {r.map((c, i) => (
                  <div
                    key={i}
                    className={
                      "shrink-0 whitespace-pre border-b-2 border-r border-b-[#cccccc] border-r-[#b4b4b4] pl-[2px] pr-[2px] pt-px font-['Liberation_Mono',monospace] text-[14.6px] leading-[20px] text-[#1c1c1c] " +
                      colW[i] + (i > 5 ? " text-right" : "") + (n === 0 && i === 0 ? " bg-[#d6d6d6]" : "")
                    }
                  >
                    {c}
                  </div>
                ))}
              </div>
            ))}
          </div>
          <div className="ml-[4px] mt-[39px] h-[13px] w-[13px] bg-[#c1c1c1]" />
        </div>
        <div className="ml-[91px] mt-[6px] h-[12px] w-[350px] rounded-[6px] bg-[#c1c1c1]" />
      </div>
      <div className="mr-[12px] mt-[15px] flex justify-end"><Btn cls="h-[34px] w-[52px]"><Fit w={21}>OK</Fit></Btn></div>
    </div>
  );
}

/* ---------- taskbar ---------- */
function Taskbar() {
  const f = SEGOE + " text-[14.5px] text-white";
  return (
    <div className="relative flex h-[60px] items-center border-t border-[#4a4642] bg-[#202020] pl-[26px] pr-[24px]">
      <Svg w={38} h={38}>
        <path d="M0 21q2-14 12.500-15Q23 7 25 21q-3-3-6 0-3.500-3-6.500 0-3-3-6 0-3-3-6.500 0z" fill="#63b1f3" />
        <path d="M12.500 20v11q0 4-4 4-3 0-3-3" stroke="#8b8b8b" strokeWidth="2" />
        <circle cx="22.500" cy="6" r="10" fill="#c42b1c" />
        <text x="18.700" y="11" fontSize="14" fill="#fff" fontFamily="Open Sans, sans-serif">8</text>
      </Svg>
      <div className="flex w-[110px] flex-col items-start pb-[2px]">
        <Fit w={84} className={f}>Rain coming</Fit>
        <Fit w={103} className={SEGOE + " text-[14.5px] text-[#d0d0d0]"}>In about 1 hour</Fit>
      </div>
      <Svg w={29} h={29} className="ml-[301px]">
        <defs><linearGradient id="win" x1="0" y1="0" x2="1" y2="1"><stop stopColor="#8be0ff" /><stop offset="1" stopColor="#0a95f5" /></linearGradient></defs>
        <path d="M0 0h14v14H0zM15 0h14v14H15zM0 15h14v14H0zM15 15h14v14H15z" fill="url(#win)" />
      </Svg>
      <div className="ml-[18px] flex h-[38px] w-[273px] items-center rounded-full bg-[#f3f3f3] pl-[14px] pr-[5px]">
        <Svg w={18} h={19}><circle cx="8" cy="8" r="7" stroke="#222" strokeWidth="1.900" /><path d="M12.500 13.500l5 5" stroke="#222" strokeWidth="2.200" /></Svg>
        <Fit w={52} className={SEGOE + " ml-[13px] text-[15.5px] text-[#5c5c5c]"}>Search</Fit>
        <Svg w={58} h={26} className="ml-auto">
          <path d="M1 25Q8 14 14 3" stroke="#c43e10" strokeWidth="1.500" />
          <path d="M13 6q0-5 4-6 1 5-4 6zM10 10q-4-4-2-8 4 3 2 8zM12 12q5-5 10-3-4 5-10 3zM7 14q-5-3-5-8 6 2 5 8zM9 17q6-4 11-1-6 4-11 1zM5 20q-4-2-5-6 5 1 5 6z" fill="#d9481a" />
          <path d="M20 21l5-4-2-6 5 1 3-5 3 6 8-1-4 6 1 3-8 1-5 2-2-3z" fill="#f39a32" />
          <path d="M38 10l6-5 5-2 3 3 6 2-4 4-4 1-5 1-2-3z" fill="#a09a1c" />
        </Svg>
      </div>
      <Svg w={30} h={28} className="ml-[16px]"><rect x="8" y="0" width="22" height="20" rx="2" fill="#f1f1f1" /><rect x="0" y="8" width="22" height="20" rx="2" fill="#7b7b7b" opacity=".9" /></Svg>
      <Svg w={28} h={28} className="ml-[26px]">
        <defs><linearGradient id="cpA" x1="0" y1="0" x2="0" y2="1"><stop stopColor="#1677e8" /><stop offset=".5" stopColor="#22b4b0" /><stop offset="1" stopColor="#f4c81c" /></linearGradient><linearGradient id="cpB" x1="0" y1="0" x2="0" y2="1"><stop stopColor="#9a62f0" /><stop offset=".55" stopColor="#ee5f9d" /><stop offset="1" stopColor="#fb9a5c" /></linearGradient></defs>
        <path d="M8 2h9q3 0 4 4h-4q-3 0-4 4l-3 11q-1 3-4 3-6 0-6-6L4 6q1-4 4-4z" fill="url(#cpA)" />
        <path d="M20 26h-9q-3 0-4-4h4q3 0 4-4l3-11q1-3 4-3 6 0 6 6l-4 12q-1 4-4 4z" fill="url(#cpB)" />
      </Svg>
      <Svg w={29} h={30} className="ml-[26px]"><circle cx="11" cy="6" r="5.500" fill="#8c8df5" /><circle cx="22" cy="9" r="4.500" fill="#6a5fe0" /><path d="M14 12h14v9q0 8-7 8h-7z" fill="#5b50d6" /><path d="M4 12h14v11q0 6-7 6-5 0-7-4z" fill="#8084f0" /><rect y="15" width="13" height="12" rx="2" fill="#4049c0" /><text x="3" y="25" fontSize="11" fontWeight="700" fill="#fff" fontFamily="Open Sans, sans-serif">T</text></Svg>
      <div className="relative ml-[26px]">
        <Svg w={30} h={28}><path d="M0 3q0-2 2-2h8l3 3h15q2 0 2 2v5H0z" fill="#e2a213" /><path d="M0 7h12l3-2h15v21q0 2-2 2H2q-2 0-2-2z" fill="#ffcf48" /><path d="M5 28v-5q0-3 3-3h14q3 0 3 3v5z" fill="#1684d8" /><path d="M10 24h10" stroke="#0b4f8c" strokeWidth="1.500" /></Svg>
        <div className="absolute left-[11px] top-[35px] h-[4px] w-[8px] rounded-full bg-[#9a9a9a]" />
      </div>
      <Svg w={30} h={30} className="ml-[25px]">
        <defs><linearGradient id="edA" x1="0" y1="0" x2="1" y2=".4"><stop stopColor="#29a9e8" /><stop offset="1" stopColor="#5be05a" /></linearGradient></defs>
        <circle cx="15" cy="15" r="15" fill="#1584d8" />
        <path d="M0 13C2-4 29-5 30 13c0 6-6 8-11 6 3-3 2-9-5-9C7 10 1 12 0 17z" fill="url(#edA)" />
        <path d="M14 11c-7 2-7 18 8 17 3-1 5-3 7-6-6 3-14 1-15-4-.300-3 1-4 3-5z" fill="#0d4a8a" />
      </Svg>
      <Svg w={30} h={30} className="ml-[25px]"><path d="M9 7V1h11v6" stroke="#35a8ea" strokeWidth="2" /><path d="M1 5h27v21q0 4-4 4H5q-4 0-4-4z" fill="#f4f4f4" /><path d="M9 11h5v5H9z" fill="#f25022" /><path d="M15.500 11h5v5h-5z" fill="#7fba00" /><path d="M9 17.500h5v5H9z" fill="#00a4ef" /><path d="M15.500 17.500h5v5h-5z" fill="#ffb900" /><circle cx="26" cy="3" r="10" fill="#4cc2ff" /><text x="22.500" y="8" fontSize="14" fill="#10222e" fontFamily="Open Sans, sans-serif">1</text></Svg>
      <Svg w={30} h={30} className="ml-[25px]">
        <defs><linearGradient id="ijA" x1="0" y1="1" x2="1" y2="0"><stop offset=".35" stopColor="#087cfa" /><stop offset=".6" stopColor="#b14ad0" /><stop offset=".85" stopColor="#fe315d" /></linearGradient></defs>
        <path d="M10 0h20v20l-8 10H0V12z" fill="url(#ijA)" /><rect x="6" y="6" width="18" height="18" fill="#000" /><path d="M8 20.500h7" stroke="#fff" strokeWidth="1.500" /><text x="8" y="16" fontSize="10" fontWeight="700" fill="#fff" fontFamily="Liberation Mono, monospace">IJ</text>
      </Svg>
      <Svg w={30} h={30} className="ml-[25px]"><circle cx="15" cy="15" r="14" fill="#1b45dd" stroke="#fff" strokeWidth="1.800" /><path d="M14 3L7 22M11 12q5-3 4 2l-3 8M19 9l-7 19M19 10q6-2 4.500 3l-2 6q-1 3-5 2" stroke="#fff" strokeWidth="2.200" /></Svg>
      <Svg w={30} h={30} className="ml-[25px]"><circle cx="15" cy="15" r="14" fill="#1596d1" stroke="#fff" strokeWidth="2" /><path d="M9.500 12q0-6 5.500-6t5.500 5q0 3-3 5-2 1-2 3" stroke="#fff" strokeWidth="3.500" /><circle cx="15.300" cy="24" r="2.300" fill="#fff" /><circle cx="26" cy="3" r="10" fill="#ffc20a" /></Svg>
      <Svg w={27} h={30} className="ml-[26px]"><path d="M0 0l13.500 8L27 0v23l-13.500 7L0 23zM5 9v11l8.500 4.500L22 20V9l-8.500 5z" fill="#c8302b" fillRule="evenodd" /></Svg>
      <div className="relative ml-[27px]">
        <Svg w={30} h={30}><circle cx="15" cy="15" r="15" fill="#fbc116" /><path d="M15 15L2 7.500A15 15 0 0 1 28 7.500H15z" fill="#e33b2e" /><path d="M2 7.500A15 15 0 0 0 14 30l7-12-12-.500z" fill="#2da14c" /><circle cx="15" cy="15" r="6.800" fill="#fff" /><circle cx="15" cy="15" r="5.400" fill="#2f7de8" /></Svg>
        <div className="absolute left-[11px] top-[36px] h-[4px] w-[8px] rounded-full bg-[#9a9a9a]" />
      </div>
      <div className="ml-[15px] h-[50px] w-[51px] rounded-[5px] border border-[#3a3a3a] bg-[#262626]">
        <div className="relative flex h-[48px] w-[45px] items-center justify-center rounded-[5px] border-r border-[#454545] bg-[#303030] pl-[4px]">
          <Diamond r={15} />
          <div className="absolute left-[15px] top-[44px] h-[4px] w-[20px] rounded-full bg-[#4cc2ff]" />
        </div>
      </div>
      <Svg w={14} h={9} className="ml-auto"><path d="M1 8l6-6 6 6" stroke="#fff" strokeWidth="2" /></Svg>
      <Svg w={21} h={20} className="ml-[22px]"><path d="M5 17q-5 0-5-5t5-5q2-5 7-4t6 5q3 1 3 5t-4 4z" fill="#8c8c8c" /><path d="M1 1l19 18" stroke="#202020" strokeWidth="4" /><path d="M1 1l19 18" stroke="#fff" strokeWidth="1.600" /></Svg>
      <Svg w={20} h={22} className="ml-[20px]"><path d="M1 9Q4 1 10 1q6 0 8 5M18.500 1v6h-6M1.500 21v-6h6M2 16q3 5 8 5" stroke="#fff" strokeWidth="1.700" /><circle cx="15" cy="16" r="5" fill="#f8990a" /></Svg>
      <div className="ml-[24px] flex w-[29px] flex-col items-center pb-[2px]"><Fit w={29} className={f}>ENG</Fit><Fit w={15} className={f}>IN</Fit></div>
      <Svg w={20} h={15} className="ml-[22px]"><path d="M1 6q9-9 18 0M4 9q6-6 12 0M7 12q3-3 6 0" stroke="#fff" strokeWidth="1.600" /><circle cx="10" cy="13.500" r="1.600" fill="#fff" /></Svg>
      <Svg w={20} h={17} className="ml-[10px]"><path d="M1 6h3l5-5v15l-5-5H1z" stroke="#fff" strokeWidth="1.500" /><path d="M11.500 5.500q2 3 0 6M14 3q4 5.500 0 11" stroke="#fff" strokeWidth="1.400" /><path d="M17 1q5 7.500 0 15" stroke="#777" strokeWidth="1.400" /></Svg>
      <Svg w={20} h={16} className="ml-[10px]"><rect x="1" y="4" width="16" height="11" rx="2.500" stroke="#fff" strokeWidth="1.500" /><rect x="3.500" y="6.500" width="11" height="6" fill="#fff" /><path d="M18 7.500h1.500v4H18z" fill="#fff" /><path d="M5 0L0 6h3l-1 5 6-7H5z" fill="#fff" stroke="#202020" strokeWidth=".7" /></Svg>
      <div className="ml-[20px] flex w-[78px] flex-col items-end pb-[2px]"><Fit w={36} className={f}>22:06</Fit><Fit w={78} className={f}>29-10-2025</Fit></div>
    </div>
  );
}

export default function App() {
  return (
    <div className="relative h-[1080px] w-[1920px] overflow-hidden bg-white">
      <TitleBar />
      <MenuBar />
      <div className="flex h-[743px]">
        <div className="w-[1607px] shrink-0"><Toolbar /><Canvas /></div>
        <div className="w-[7px] shrink-0 border-l-2 border-[#d5d5d5] bg-[#fafafa]" />
        <SidePanel />
      </div>
      <Palette />
      <StatusBar />
      {/* window shadows fall on the main window but not on the taskbar */}
      <div className="pointer-events-none absolute left-0 top-[63px] h-[957px] w-[1920px] overflow-hidden">
        <div className="absolute left-[150px] top-[72px] h-[643px] w-[657px] rounded-[10px] [box-shadow:0_12px_34px_rgba(0,0,0,0.26)]" />
        <div className="absolute left-[929px] top-[73px] h-[642px] w-[961px] rounded-[10px] [box-shadow:0_18px_50px_rgba(0,0,0,0.36)]" />
      </div>
      <AnalysisDialog />
      <TableDialog />
      <Taskbar />
    </div>
  );
}
